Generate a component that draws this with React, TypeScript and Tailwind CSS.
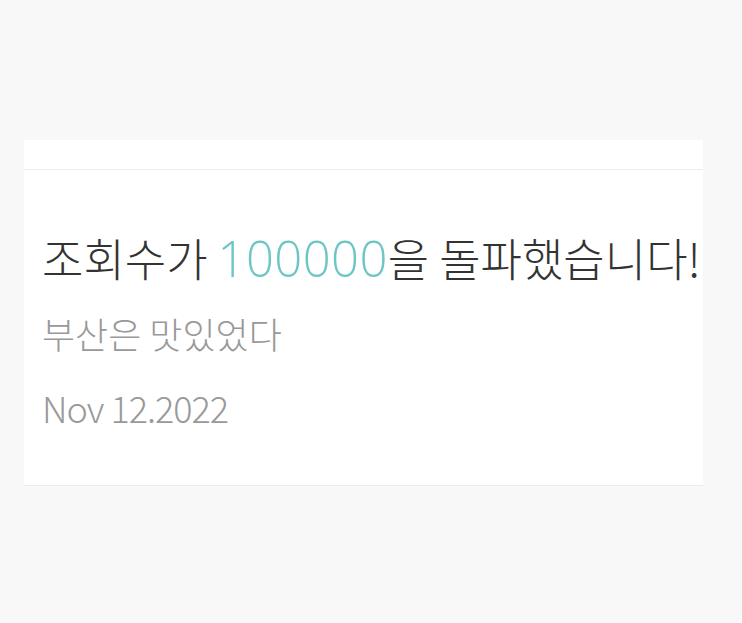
export default function App() {
  return (
    <div className="min-h-[623px] bg-[#f8f8f8] pt-[140px] font-['Noto_Sans_CJK_KR',sans-serif]">
      <div className="ml-[24px] w-[679px] border-b border-[#ececec] bg-white">
        <div className="h-[30px] border-b border-[#ececec]" />
        <div className="pl-[18px] pb-[55px] pt-[58px]">
          <h1 className="whitespace-nowrap text-[45px] font-light leading-[60px] text-[#333]">
            조회수가{" "}
            <span className="font-['Open_Sans',sans-serif] text-[49px] tracking-[0.4px] text-[#6cc6c4]">
              100000
            </span>
            을 돌파했습니다!
          </h1>
          <p className="mt-[21px] text-[36px] font-light leading-[48px] text-[#999]">부산은 맛있었다</p>
          <p className="mt-[27px] text-[36px] font-light leading-[46px] tracking-[-1px] text-[#999]">
            Nov 12.2022
          </p>
        </div>
      </div>
    </div>
  );
}
